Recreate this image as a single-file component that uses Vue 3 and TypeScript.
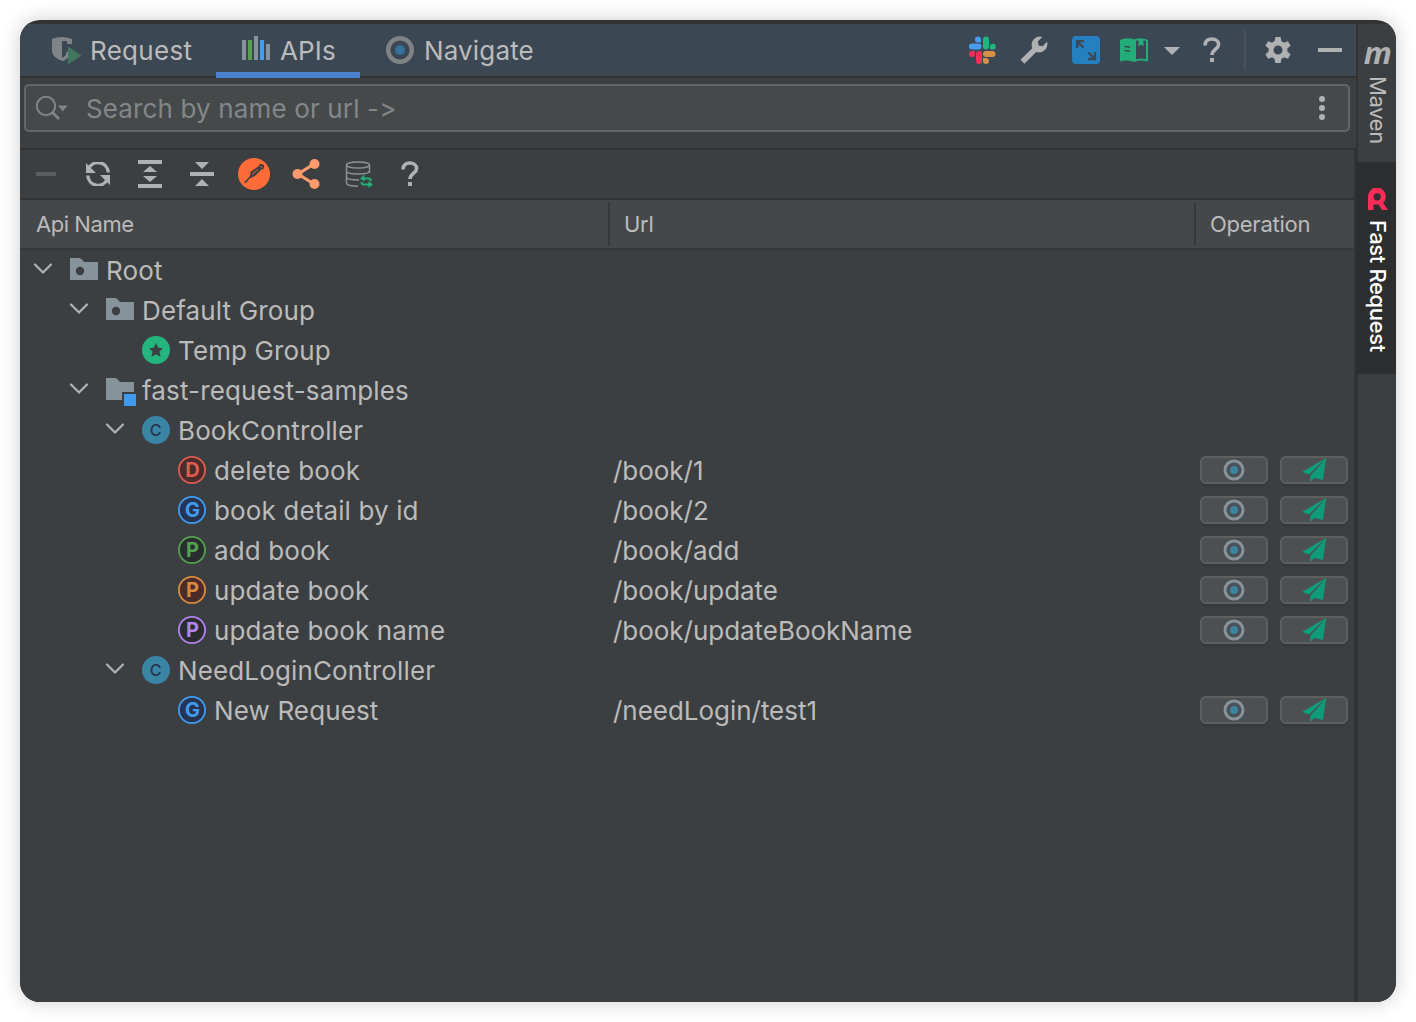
<script setup lang="ts">
type IconKind = 'folder' | 'module' | 'star' | 'class' | 'method'

interface Row {
  depth: number
  icon: IconKind
  name: string
  open?: boolean
  url?: string
  letter?: string
  color?: string
  fill?: string
}

const rows: Row[] = [
  { depth: 0, icon: 'folder', name: 'Root', open: true },
  { depth: 1, icon: 'folder', name: 'Default Group', open: true },
  { depth: 2, icon: 'star', name: 'Temp Group' },
  { depth: 1, icon: 'module', name: 'fast-request-samples', open: true },
  { depth: 2, icon: 'class', name: 'BookController', open: true },
  { depth: 3, icon: 'method', name: 'delete book', url: '/book/1', letter: 'D', color: '#db5c51', fill: '#4a2c2b' },
  { depth: 3, icon: 'method', name: 'book detail by id', url: '/book/2', letter: 'G', color: '#3f9bf0', fill: '#263450' },
  { depth: 3, icon: 'method', name: 'add book', url: '/book/add', letter: 'P', color: '#53a04f', fill: '#2a2d2f' },
  { depth: 3, icon: 'method', name: 'update book', url: '/book/update', letter: 'P', color: '#d88a3f', fill: '#4a2c2b' },
  { depth: 3, icon: 'method', name: 'update book name', url: '/book/updateBookName', letter: 'P', color: '#b283ee', fill: '#2a2d2f' },
  { depth: 2, icon: 'class', name: 'NeedLoginController', open: true },
  { depth: 3, icon: 'method', name: 'New Request', url: '/needLogin/test1', letter: 'G', color: '#3f9bf0', fill: '#263450' },
]
</script>

<template>
  <div class="desktop">
    <div class="window">
      <main class="panel">
        <header class="tabs">
          <div class="tab tab-request">
            <svg width="32" height="32" viewBox="0 0 32 32">
              <path d="M2 5Q7 3 12 3Q17 3 22 5V10H17V7H12V24H14L16 26L12 27Q2 23 2 17Z" fill="#7f8487" />
              <path d="M16 19V21L12 24V27L18 24V17Z" fill="#7f8487" />
              <path d="M18 12.500L31.500 21.500L18 30.500Z" fill="#42775f" />
            </svg>
            <span>Request</span>
          </div>
          <div class="tab tab-apis active">
            <svg width="32" height="32" viewBox="0 0 32 32">
              <path d="M2 6h4v20h-4zM14 2h4v24h-4zM26 10h4v16h-4z" fill="#87939a" />
              <path d="M8 6h4v20h-4z" fill="#5aa14f" />
              <path d="M20 6h4v20h-4z" fill="#3f9df2" />
            </svg>
            <span>APIs</span>
          </div>
          <div class="tab tab-navigate">
            <svg width="32" height="32" viewBox="0 0 32 32">
              <circle cx="16" cy="16" r="11.800" fill="none" stroke="#7f8386" stroke-width="4.400" />
              <circle cx="16" cy="16" r="5" fill="#357299" />
            </svg>
            <span>Navigate</span>
          </div>
          <div class="actions">
            <div class="act">
              <svg width="28" height="28" viewBox="0 0 28 28">
                <g fill="#459fee"><path d="M13 6.500H10A3 3 0 1 1 13 3.500Z" /><rect x="1" y="7.500" width="12.500" height="6" rx="3" /></g>
                <g fill="#24b47e"><rect x="15" y="0.500" width="6" height="13" rx="3" /><path d="M22 13.500V10.500A2.900 2.900 0 1 1 25 13.500Z" /></g>
                <g fill="#fb2c58"><path d="M7 15V18A3 3 0 1 1 4 15Z" /><rect x="8" y="15" width="6" height="13" rx="3" /></g>
                <g fill="#d58f46"><rect x="15" y="15" width="12.500" height="6" rx="3" /><path d="M15 22H18A3 3 0 1 1 15 25Z" /></g>
              </svg>
            </div>
            <div class="act">
              <svg width="28" height="28" viewBox="0 0 28 28">
                <path d="M4.500 27.800L0.500 23.800L12.200 12.200Q10.500 6.500 14 3Q18 -.5 22.300 1L17.800 5.500L18.600 9.400L22.500 10.200L27 5.700Q28.500 10 25.200 13.700Q21.500 17.500 16.200 16Z" fill="#afb1b3" />
              </svg>
            </div>
            <div class="act">
              <svg width="28" height="28" viewBox="0 0 28 28">
                <rect width="28" height="28" rx="4" fill="#2580bf" />
                <path d="M5.200 12V5.200H12M5.200 5.200L11.500 11.500M23 16V23H16M23 23L16.500 16.500" fill="none" stroke="#3c4754" stroke-width="2.300" />
              </svg>
            </div>
            <div class="act act-book">
              <svg width="28" height="24" viewBox="0 0 28 24">
                <path d="M0 2Q7-1 14 1.500Q21-1 28 2V23.500Q21 21.500 14 24Q7 21.500 0 23.500Z" fill="#24ad78" />
                <path d="M16 3Q21 1 26 3V21Q21 19.800 16 21.200Z" fill="#3c4754" />
                <path d="M18.500 1H23.500V8.500L21 6.500L18.500 8.500Z" fill="#24ad78" />
                <path d="M4.500 8.500L10 9.200M4.500 12.500L10 13.200" stroke="#3c4754" stroke-width="1.600" />
              </svg>
            </div>
            <div class="act act-arrow">
              <svg width="16" height="8" viewBox="0 0 16 8"><path d="M0 0H16L8 8Z" fill="#afb1b3" /></svg>
            </div>
            <div class="act act-help">
              <svg width="18" height="26" viewBox="0 0 18 26">
                <path d="M2 8.500C2 4.300 4.800 2 8.800 2S15.600 4.300 15.600 7.500C15.600 12 9.200 12.500 9 18" fill="none" stroke="#afb1b3" stroke-width="3.600" />
                <path d="M7 21h4v4h-4z" fill="#afb1b3" />
              </svg>
            </div>
            <i class="sep"></i>
            <div class="act">
              <svg width="26" height="26" viewBox="-13 -13 26 26">
                <circle r="7" fill="none" stroke="#afb1b3" stroke-width="5" />
                <g fill="#afb1b3">
                  <path v-for="a in [0, 60, 120, 180, 240, 300]" :key="a" :transform="`rotate(${a})`" d="M-3.600 -8L-2.600 -13H2.600L3.600 -8Z" />
                </g>
              </svg>
            </div>
            <div class="act">
              <svg width="24" height="4" viewBox="0 0 24 4"><path d="M0 0h24v4H0z" fill="#afb1b3" /></svg>
            </div>
          </div>
        </header>

        <section class="search-wrap">
          <div class="search">
            <svg class="lens" width="34" height="26" viewBox="0 0 34 26">
              <circle cx="10" cy="11" r="9.200" fill="none" stroke="#7f868b" stroke-width="2" />
              <path d="M16.500 17.500L23 24" stroke="#7f868b" stroke-width="2.600" />
              <path d="M22 10.500H31.500L26.700 16.500Z" fill="#7f868b" />
            </svg>
            <span class="placeholder">Search by name or url -&gt;</span>
            <svg class="dots" width="6" height="24" viewBox="0 0 6 24" fill="#afb1b3">
              <circle cx="3" cy="3" r="3" /><circle cx="3" cy="12" r="3" /><circle cx="3" cy="21" r="3" />
            </svg>
          </div>
        </section>

        <nav class="toolbar">
          <div class="tool"><svg width="20" height="4"><path d="M0 0h20v4H0z" fill="#5b5e60" /></svg></div>
          <div class="tool">
            <svg width="24" height="24" viewBox="0 0 24 24">
              <path d="M2.800 6.500A10.200 10.200 0 0 1 22.200 10.500M21.200 17.500A10.200 10.200 0 0 1 1.800 13.500" fill="none" stroke="#afb1b3" stroke-width="3.400" />
              <path d="M0 1V11H10ZM24 23V13H14Z" fill="#afb1b3" />
            </svg>
          </div>
          <div class="tool">
            <svg width="24" height="28" viewBox="0 0 24 28" fill="#afb1b3"><path d="M0 0h24v4H0zM0 24h24v4H0zM5 12L12 6L19 12ZM5 16H19L12 22Z" /></svg>
          </div>
          <div class="tool">
            <svg width="24" height="24" viewBox="0 0 24 24" fill="#afb1b3"><path d="M0 10h24v4H0zM5 0H19L12 7ZM5 24L12 17L19 24Z" /></svg>
          </div>
          <div class="tool">
            <svg width="32" height="32" viewBox="0 0 32 32">
              <circle cx="16" cy="16" r="16" fill="#ff6c37" />
              <path d="M12.500 14L20 8.500L23 12L17 18L11.500 20.500L8 25L6 24.500L12 18Z" fill="#3c3f41" />
              <circle cx="23.300" cy="8.700" r="2.800" fill="#3c3f41" />
              <path d="M22.500 8.200L24.500 9.500M14 16.500L20 11.500" stroke="#ff6c37" stroke-width=".9" />
            </svg>
          </div>
          <div class="tool">
            <svg width="28" height="30" viewBox="0 0 28 30">
              <path d="M22 5L6 15L22 25" fill="none" stroke="#ff9a6c" stroke-width="3.200" />
              <g fill="#ff9a6c"><circle cx="22.500" cy="5" r="5" /><circle cx="5.500" cy="15" r="5" /><circle cx="22.500" cy="25" r="5" /></g>
            </svg>
          </div>
          <div class="tool">
            <svg class="db" width="28" height="28" viewBox="0 0 28 28" fill="none">
              <g stroke="#8d9092" stroke-width="1.500">
                <ellipse cx="13" cy="4" rx="11.500" ry="3" />
                <path d="M1.500 4V22C1.500 24 5 25.200 13 25.200M24.500 4V12M1.500 10C1.500 14 24.500 14 24.500 10M1.500 16C1.500 18.500 6 19 14 19" />
              </g>
              <path d="M17.500 17.500H23Q26 17.500 26 20M25.500 23.500H19Q16.500 23.500 16.500 21" stroke="#24ad78" stroke-width="2" />
              <path d="M15 17.500L19.500 13.500V20.500ZM28 23.500L23.500 20V27Z" fill="#24ad78" />
            </svg>
          </div>
          <div class="tool">
            <svg width="18" height="26" viewBox="0 0 18 26">
              <path d="M2 8.500C2 4.300 4.800 2 8.800 2S15.600 4.300 15.600 7.500C15.600 12 9.200 12.500 9 18" fill="none" stroke="#afb1b3" stroke-width="3.600" />
              <path d="M7 21h4v4h-4z" fill="#afb1b3" />
            </svg>
          </div>
        </nav>

        <section class="table">
          <div class="thead">
            <div class="th th-name"><span>Api Name</span></div>
            <div class="th th-url"><span>Url</span></div>
            <div class="th th-op"><span>Operation</span></div>
          </div>
          <div v-for="row in rows" :key="row.name" class="row">
            <div class="cell-name" :style="{ paddingLeft: 12 + row.depth * 36 + 'px' }">
              <svg class="chevron" width="22" height="12" viewBox="0 0 22 12">
                <path v-if="row.open" d="M3 1.500L11 9.500L19 1.500" fill="none" stroke="#afb1b3" stroke-width="2.200" stroke-linecap="round" />
              </svg>
              <svg class="icon" width="32" height="32" viewBox="-2 -2 32 32">
                <template v-if="row.icon === 'folder'">
                  <path d="M0 2H9Q11 2 14 6H28V24H0Z" fill="#87939a" />
                  <circle cx="10" cy="15" r="4.200" fill="#3c3f41" />
                </template>
                <template v-else-if="row.icon === 'module'">
                  <path d="M0 2H9Q11 2 14 6H28V16H16V24H0Z" fill="#87939a" />
                  <path d="M18 18h12v12H18z" fill="#3f9bf0" />
                </template>
                <template v-else-if="row.icon === 'star'">
                  <circle cx="14" cy="14" r="14" fill="#24b47e" />
                  <path d="M14 7L16.200 11.700L21 12.200L17.500 15.600L18.500 20.800L14 18.300L9.500 20.800L10.500 15.600L7 12.200L11.800 11.700Z" fill="#3c3f41" />
                </template>
                <template v-else-if="row.icon === 'class'">
                  <circle cx="14" cy="14" r="14" fill="#3a84a4" />
                  <text x="13.700" y="19.900" class="class-letter">C</text>
                </template>
                <template v-else>
                  <circle cx="14" cy="14" r="13.100" :fill="row.fill" :stroke="row.color" stroke-width="1.800" />
                  <text x="14.500" y="21" class="method-letter" :fill="row.color">{{ row.letter }}</text>
                </template>
              </svg>
              <span class="label">{{ row.name }}</span>
            </div>
            <div class="cell-url">{{ row.url }}</div>
            <div v-if="row.url" class="cell-op">
              <button class="btn">
                <svg width="22" height="22" viewBox="0 0 22 22">
                  <circle cx="11" cy="11" r="9" fill="none" stroke="#87939a" stroke-width="3" />
                  <circle cx="11" cy="11" r="4" fill="#3a84a4" />
                </svg>
              </button>
              <button class="btn">
                <svg width="24" height="24" viewBox="0 0 24 24">
                  <path d="M24 0L0 14L7 16.500ZM24 0L8.500 17.500V24L12.500 19.700L21 22Z" fill="#0d9e79" />
                  <path d="M20 4.500L8 16.800" stroke="#4c5052" stroke-width="1" />
                </svg>
              </button>
            </div>
          </div>
        </section>
      </main>

      <aside class="stripe">
        <div class="maven">
          <b class="m">m</b>
          <span class="vertical">Maven</span>
        </div>
        <div class="fast">
          <svg width="20" height="22" viewBox="0 0 20 22">
            <path d="M0 22V8.500A8.500 8.500 0 0 1 17.800 8.500Q17.800 12.500 15 14.500L20 22H14L10.500 16.500H5.500V22Z" fill="#fb2c58" />
            <circle cx="9.200" cy="8.800" r="3.600" fill="#2c2d2f" />
          </svg>
          <span class="vertical">Fast Request</span>
        </div>
      </aside>
    </div>
  </div>
</template>

<style>
body {
  background: #fff;
  overflow: hidden;
}
</style>

<style scoped>
.desktop {
  box-sizing: border-box;
  width: 1416px;
  height: 1022px;
  padding: 20px;
  font-family: Inter, "Liberation Sans", sans-serif;
  font-size: 26px;
  color: #bbbbbb;
}
.window {
  box-sizing: border-box;
  display: flex;
  height: 982px;
  padding-top: 4px;
  border-radius: 20px;
  overflow: hidden;
  background: #313335;
  box-shadow: 0 0 20px rgba(0, 0, 0, 0.2);
}
svg { display: block; flex: none; }
.panel {
  display: flex;
  flex-direction: column;
  width: 1336px;
}
.tabs {
  display: flex;
  height: 52px;
  background: #3c4754;
  border-bottom: 2px solid #323232;
}
.tab {
  box-sizing: border-box;
  display: flex;
  align-items: center;
  gap: 8px;
  height: 54px;
  padding-bottom: 2px;
  letter-spacing: 0.15px;
  white-space: nowrap;
}
.tab-request { width: 196px; padding-left: 30px; letter-spacing: 0.3px; }
.tab-apis { width: 144px; padding-left: 24px; }
.tab-navigate { padding-left: 24px; }
.active { box-shadow: inset 0 -6px #4882cb; }
.actions {
  display: flex;
  margin-left: auto;
}
.act {
  display: flex;
  align-items: center;
  justify-content: center;
  width: 52px;
}
.act-book { width: 44px; }
.act-arrow { width: 32px; padding-top: 2px; box-sizing: border-box; }
.act-help { width: 48px; }
.sep {
  width: 2px;
  height: 40px;
  margin: 6px 6px 0 8px;
  background: #4b5157;
}
.search-wrap {
  box-sizing: border-box;
  height: 72px;
  padding: 6px 6px 0 4px;
  background: #3c3f41;
  border-bottom: 2px solid #323232;
}
.search {
  box-sizing: border-box;
  display: flex;
  align-items: center;
  height: 48px;
  padding: 0 23px 0 10px;
  border: 2px solid #646768;
  border-radius: 5px;
  background: #45494a;
}
.placeholder {
  margin-left: 16px;
  color: #83878a;
  letter-spacing: 0.14px;
}
.dots { margin-left: auto; }
.toolbar {
  display: flex;
  width: 1334px;
  height: 48px;
  background: #3c3f41;
  border-bottom: 2px solid #323232;
}
.tool {
  display: flex;
  align-items: center;
  justify-content: center;
  width: 52px;
}
.db { margin: 2px 0 0 1px; }
.table {
  flex: 1;
  width: 1334px;
  background: #3c3f41;
}
.thead {
  display: flex;
  align-items: center;
  height: 48px;
  background: #45484a;
  border-bottom: 2px solid #35383a;
  font-size: 22px;
}
.th {
  box-sizing: border-box;
  display: flex;
  align-items: center;
  height: 44px;
  padding-left: 14px;
  letter-spacing: -0.25px;
}
.th-name { width: 588px; padding-left: 16px; letter-spacing: -0.45px; }
.th-url { width: 586px; border-left: 2px solid #35383a; }
.th-op { width: 160px; border-left: 2px solid #35383a; }
.row {
  display: flex;
  align-items: center;
  height: 40px;
  letter-spacing: 0.13px;
  white-space: nowrap;
}
.cell-name {
  box-sizing: border-box;
  display: flex;
  align-items: center;
  width: 593px;
}
.chevron { margin-right: 14px; margin-bottom: 3px; }
.icon { margin-right: 6px; overflow: visible; }
.cell-url { width: 587px; letter-spacing: -0.03px; }
.class-letter {
  font-size: 16px;
  font-weight: 500;
  fill: #263450;
  text-anchor: middle;
  letter-spacing: 0;
}
.method-letter {
  font-size: 20px;
  font-weight: 700;
  text-anchor: middle;
  letter-spacing: 0;
}
.cell-op {
  display: flex;
  gap: 12px;
}
.btn {
  box-sizing: border-box;
  display: flex;
  align-items: center;
  justify-content: center;
  width: 68px;
  height: 28px;
  padding: 0;
  border: 2px solid #5e6060;
  border-radius: 6px;
  background: #4c5052;
  box-shadow: 0 3px 0 #37393b;
}
.stripe {
  display: flex;
  flex-direction: column;
  width: 40px;
  font-size: 22px;
  letter-spacing: -0.35px;
  background: linear-gradient(90deg, #323232 2px, #3c3f41 2px);
}
.maven {
  box-sizing: border-box;
  display: flex;
  flex-direction: column;
  align-items: center;
  height: 138px;
  padding-left: 3px;
}
.m {
  height: 45px;
  margin-top: 7px;
  font: italic 700 31px/42px "Open Sans", sans-serif;
  color: #afb1b3;
}
.vertical {
  writing-mode: vertical-rl;
  line-height: 26px;
  white-space: nowrap;
}
.fast {
  display: flex;
  flex-direction: column;
  align-items: center;
  gap: 10px;
  box-sizing: border-box;
  height: 212px;
  padding: 26px 0 0 3px;
  background: #2c2d2f;
  color: #fff;
  font-weight: 500;
}
</style>
